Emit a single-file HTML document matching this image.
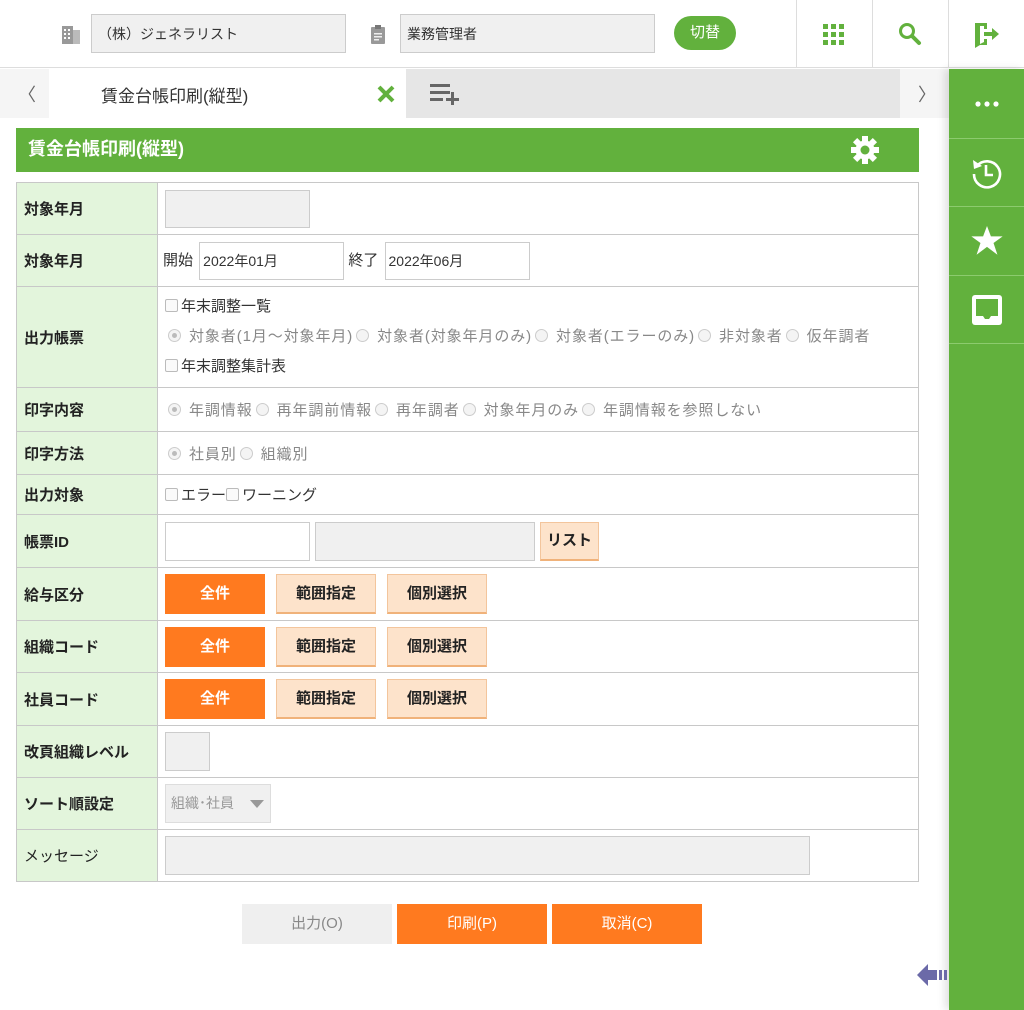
<!DOCTYPE html>
<html><head><meta charset="utf-8"><style>
*{box-sizing:border-box;margin:0;padding:0}
body{width:1024px;height:1010px;overflow:hidden;background:#fff;font-family:"Liberation Sans","Noto Sans CJK JP",sans-serif;font-size:15px;color:#333;position:relative}
.a{position:absolute}
.inp{position:absolute;border:1px solid #ccc;background:#f0f0f0;font-size:14px;padding-left:6px;display:flex;align-items:center}
.vd{position:absolute;top:0;width:1px;height:68px;background:#ddd}
table{position:absolute;left:16px;top:182px;width:903px;border-collapse:collapse}
td{border:1px solid #c8c8c8;vertical-align:middle}
td.l{width:141px;background:#e3f5dc;font-weight:bold;padding-left:7px;font-size:15px;color:#222}
td.v{padding-left:7px;position:relative}
.g{color:#888;letter-spacing:0.9px}
.rb{display:inline-block;width:13px;height:13px;border:1px solid #ccc;border-radius:50%;background:#f4f4f4;vertical-align:-1px;margin:0 8px 0 3px;position:relative}
.rb.on:after{content:"";position:absolute;left:3px;top:3px;width:5px;height:5px;border-radius:50%;background:#bbb}
.cb{display:inline-block;width:13px;height:13px;border:1px solid #bbb;border-radius:2px;background:#fafafa;vertical-align:-1px;margin-right:3px}
.btn{display:inline-block;height:40px;width:100px;text-align:center;line-height:40px;font-weight:bold;font-size:15px;margin-right:11px;vertical-align:middle}
.bo{background:#ff7a1f;color:#fff}
.bl{background:#fde3cb;border:1px solid #f3c59c;border-bottom:2px solid #f0b27a;color:#222;line-height:37px}
.sb{position:absolute;left:949px;width:75px;border-bottom:1px solid #8ccb6e;display:flex;align-items:center;justify-content:center}
</style></head><body>
<div class="a" style="left:0;top:0;width:1024px;height:68px;border-bottom:1px solid #ddd"></div>
<svg class="a" style="left:62px;top:24px" width="18" height="20" viewBox="0 0 18 20"><rect x="0" y="2" width="11" height="18" fill="#999"/><rect x="11" y="6" width="7" height="14" fill="#bbb"/><g fill="#fff"><rect x="2" y="5" width="2" height="2"/><rect x="6" y="5" width="2" height="2"/><rect x="2" y="9" width="2" height="2"/><rect x="6" y="9" width="2" height="2"/><rect x="2" y="13" width="2" height="2"/><rect x="6" y="13" width="2" height="2"/></g></svg>
<div class="inp" style="left:91px;top:14px;width:255px;height:39px;">（株）ジェネラリスト</div>
<svg class="a" style="left:371px;top:25px" width="14" height="19" viewBox="0 0 14 19"><rect x="0" y="2" width="14" height="17" rx="1" fill="#999"/><rect x="4" y="0" width="6" height="4" fill="#777"/><g fill="#eee"><rect x="3" y="8" width="8" height="1.5"/><rect x="3" y="11" width="8" height="1.5"/><rect x="3" y="14" width="5" height="1.5"/></g></svg>
<div class="inp" style="left:400px;top:14px;width:255px;height:39px;">業務管理者</div>
<div class="a" style="left:674px;top:16px;width:62px;height:34px;border-radius:17px;background:#62b13d;color:#fff;text-align:center;line-height:34px;font-size:15px">切替</div>
<div class="vd" style="left:796px"></div><div class="vd" style="left:872px"></div><div class="vd" style="left:948px"></div>
<svg class="a" style="left:823px;top:24px" width="21" height="21"><g fill="#62b13d"><rect x="0" y="0" width="5" height="5"/><rect x="8" y="0" width="5" height="5"/><rect x="16" y="0" width="5" height="5"/><rect x="0" y="8" width="5" height="5"/><rect x="8" y="8" width="5" height="5"/><rect x="16" y="8" width="5" height="5"/><rect x="0" y="16" width="5" height="5"/><rect x="8" y="16" width="5" height="5"/><rect x="16" y="16" width="5" height="5"/></g></svg>
<svg class="a" style="left:898px;top:22px" width="24" height="24"><circle cx="9" cy="9" r="6.5" fill="none" stroke="#62b13d" stroke-width="3"/><line x1="14" y1="14" x2="21" y2="21" stroke="#62b13d" stroke-width="4" stroke-linecap="round"/></svg>
<svg class="a" style="left:973px;top:22px" width="28" height="26" viewBox="0 0 28 26"><path d="M2 1h12v6h-3V4H7v18l4-2V17h3v6H7l-5 3z" fill="#62b13d"/><path d="M11 10h8V6l7 6-7 6v-4h-8z" fill="#62b13d"/></svg>
<div class="a" style="left:0;top:69px;width:949px;height:49px;background:#f5f5f5"></div>
<div class="a" style="left:49px;top:69px;width:357px;height:49px;background:#fff"></div>
<div class="a" style="left:406px;top:69px;width:494px;height:49px;background:#e6e6e6"></div>
<div class="a" style="left:18px;top:81px;font-size:18px;color:#666">〈</div>
<div class="a" style="left:918px;top:81px;font-size:18px;color:#666">〉</div>
<div class="a" style="left:101px;top:82px;font-size:17px;color:#333">賃金台帳印刷(縦型)</div>
<svg class="a" style="left:377px;top:85px" width="18" height="18"><path d="M2 2L16 16M16 2L2 16" stroke="#62b13d" stroke-width="4"/></svg>
<svg class="a" style="left:430px;top:83px" width="30" height="22"><g fill="#666"><rect x="0" y="1" width="20" height="3"/><rect x="0" y="8" width="20" height="3"/><rect x="0" y="15" width="13" height="3"/><rect x="16" y="15" width="13" height="3"/><rect x="21" y="9" width="3" height="13"/></g></svg>
<div class="a" style="left:949px;top:69px;width:75px;height:941px;background:#62b13d;box-shadow:-4px 0 8px rgba(0,0,0,.12)"></div>
<div class="sb" style="top:69px;height:70px"><svg width="24" height="6"><circle cx="3" cy="3" r="2.6" fill="#fff"/><circle cx="12" cy="3" r="2.6" fill="#fff"/><circle cx="21" cy="3" r="2.6" fill="#fff"/></svg></div>
<div class="sb" style="top:139px;height:68px"><svg width="34" height="34" viewBox="0 0 34 34"><path d="M7 10A13 13 0 1 1 4 18" fill="none" stroke="#fff" stroke-width="2.6"/><path d="M3 4l1 9 8-3z" fill="#fff"/><path d="M16 9v10h7" fill="none" stroke="#fff" stroke-width="2.6"/></svg></div>
<div class="sb" style="top:207px;height:69px"><svg width="32" height="30" viewBox="0 0 24 23"><path d="M12 0l3 8h9l-7 5 3 9-8-6-8 6 3-9-7-5h9z" fill="#fff"/></svg></div>
<div class="sb" style="top:276px;height:68px"><svg width="32" height="32" viewBox="0 0 32 32"><rect x="1" y="1" width="30" height="30" rx="3" fill="#fff"/><path d="M5 5h22v17h-7l-2 3h-4l-2-3H5z" fill="#62b13d"/></svg></div>
<div class="a" style="left:16px;top:128px;width:903px;height:44px;background:#62b13d;color:#fff;font-weight:bold;font-size:18px;padding-left:12px;line-height:42px">賃金台帳印刷(縦型)</div>
<svg class="a" style="left:851px;top:136px" width="28" height="28" viewBox="0 0 28 28"><g fill="#fff" transform="translate(14 14)"><rect x="-3" y="-14" width="6" height="28"/><rect x="-3" y="-14" width="6" height="28" transform="rotate(45)"/><rect x="-3" y="-14" width="6" height="28" transform="rotate(90)"/><rect x="-3" y="-14" width="6" height="28" transform="rotate(135)"/><circle r="9.5"/></g><circle cx="14" cy="14" r="4.5" fill="#62b13d"/></svg>
<table>
<tr style="height:52px"><td class="l">対象年月</td><td class="v"><div style="width:145px;height:38px;background:#f0f0f0;border:1px solid #ccc"></div></td></tr>
<tr style="height:52px"><td class="l">対象年月</td><td class="v" style="padding-left:5px">開始 <span style="display:inline-block;width:145px;height:38px;border:1px solid #ccc;vertical-align:middle;font-size:14px;line-height:36px;padding-left:3px;margin-left:2px">2022年01月</span> 終了 <span style="display:inline-block;width:145px;height:38px;border:1px solid #ccc;vertical-align:middle;font-size:14px;line-height:36px;padding-left:3px;margin-left:2px">2022年06月</span></td></tr>
<tr style="height:101px"><td class="l">出力帳票</td><td class="v" style="line-height:30px"><div><span class="cb"></span>年末調整一覧</div><div class="g" style="white-space:nowrap"><span class="rb on"></span>対象者(1月～対象年月)<span class="rb"></span>対象者(対象年月のみ)<span class="rb"></span>対象者(エラーのみ)<span class="rb"></span>非対象者<span class="rb"></span>仮年調者</div><div><span class="cb"></span>年末調整集計表</div></td></tr>
<tr style="height:44px"><td class="l">印字内容</td><td class="v g"><span class="rb on"></span>年調情報<span class="rb"></span>再年調前情報<span class="rb"></span>再年調者<span class="rb"></span>対象年月のみ<span class="rb"></span>年調情報を参照しない</td></tr>
<tr style="height:43px"><td class="l">印字方法</td><td class="v g"><span class="rb on"></span>社員別<span class="rb"></span>組織別</td></tr>
<tr style="height:40px"><td class="l">出力対象</td><td class="v"><span class="cb"></span>エラー<span class="cb"></span>ワーニング</td></tr>
<tr style="height:53px"><td class="l">帳票ID</td><td class="v"><span style="display:inline-block;width:145px;height:39px;border:1px solid #ccc;vertical-align:middle"></span><span style="display:inline-block;width:220px;height:39px;border:1px solid #ccc;background:#f0f0f0;vertical-align:middle;margin-left:5px"></span><span class="btn bl" style="width:59px;height:39px;line-height:36px;margin-left:5px">リスト</span></td></tr>
<tr style="height:53px"><td class="l">給与区分</td><td class="v"><span class="btn bo">全件</span><span class="btn bl">範囲指定</span><span class="btn bl">個別選択</span></td></tr>
<tr style="height:52px"><td class="l">組織コード</td><td class="v"><span class="btn bo">全件</span><span class="btn bl">範囲指定</span><span class="btn bl">個別選択</span></td></tr>
<tr style="height:53px"><td class="l">社員コード</td><td class="v"><span class="btn bo">全件</span><span class="btn bl">範囲指定</span><span class="btn bl">個別選択</span></td></tr>
<tr style="height:52px"><td class="l">改頁組織レベル</td><td class="v"><div style="width:45px;height:39px;background:#f0f0f0;border:1px solid #ccc"></div></td></tr>
<tr style="height:52px"><td class="l">ソート順設定</td><td class="v"><div style="width:106px;height:39px;background:#f0f0f0;border:1px solid #ddd;color:#999;font-size:14px;line-height:37px;padding-left:5px;position:relative">組織･社員<span style="position:absolute;right:6px;top:15px;border:7px solid transparent;border-top:8px solid #999;border-bottom:0"></span></div></td></tr>
<tr style="height:52px"><td class="l" style="font-weight:normal">メッセージ</td><td class="v"><div style="width:645px;height:39px;background:#f0f0f0;border:1px solid #ccc"></div></td></tr>
</table>
<div class="a" style="left:242px;top:904px;width:150px;height:40px;background:#efefef;color:#888;text-align:center;line-height:40px">出力(O)</div>
<div class="a" style="left:397px;top:904px;width:150px;height:40px;background:#ff7a1f;color:#fff;text-align:center;line-height:40px">印刷(P)</div>
<div class="a" style="left:552px;top:904px;width:150px;height:40px;background:#ff7a1f;color:#fff;text-align:center;line-height:40px">取消(C)</div>
<svg class="a" style="left:917px;top:962px" width="32" height="26" viewBox="0 0 32 26"><path d="M0 13L11 2v6h9v10h-9v6z" fill="#6b6aa8"/><rect x="22" y="8" width="3" height="10" fill="#6b6aa8"/><rect x="27" y="8" width="3" height="10" fill="#6b6aa8"/></svg>
</body></html>
